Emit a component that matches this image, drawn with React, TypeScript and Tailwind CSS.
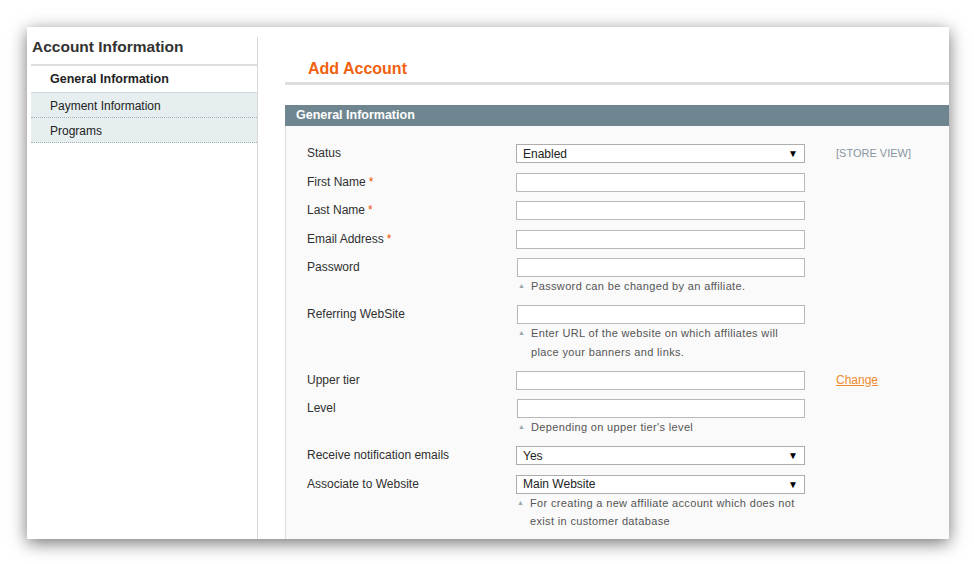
import React from "react";

type Row = {
  label: string;
  required?: boolean;
  kind: "input" | "select";
  value?: string;
  hint?: string[];
  scope?: string;
  link?: string;
  shift?: boolean;
};

const rows: Row[] = [
  { label: "Status", kind: "select", value: "Enabled", scope: "[STORE VIEW]" },
  { label: "First Name", required: true, kind: "input" },
  { label: "Last Name", required: true, kind: "input" },
  { label: "Email Address", required: true, kind: "input" },
  { label: "Password", kind: "input", shift: true, hint: ["Password can be changed by an affiliate."] },
  {
    label: "Referring WebSite",
    kind: "input",
    shift: true,
    hint: ["Enter URL of the website on which affiliates will", "place your banners and links."],
  },
  { label: "Upper tier", kind: "input", link: "Change" },
  { label: "Level", kind: "input", shift: true, hint: ["Depending on upper tier's level"] },
  { label: "Receive notification emails", kind: "select", value: "Yes" },
  {
    label: "Associate to Website",
    kind: "select",
    value: "Main Website",
    hint: ["For creating a new affiliate account which does not", "exist in customer database"],
  },
];

function Field({ row }: { row: Row }) {
  return (
    <div className="flex">
      <div className="w-[230px] shrink-0 pl-[21px] leading-[19px] text-[12px] text-[#303030]">
        {row.label}
        {row.required && <span className="ml-[3px] text-[#eb5202]">*</span>}
      </div>
      <div className={`w-[289px] shrink-0 ${row.shift ? "pl-[1px]" : ""}`}>
        {row.kind === "select" ? (
          <div className="flex h-[19px] items-center justify-between border border-[#adadad] bg-white pl-[6px] pr-[6px] text-[12px] text-[#222]">
            <span>{row.value}</span>
            <span className="text-[10px] text-black">▼</span>
          </div>
        ) : (
          <div className="h-[19px] border border-[#b8b8b8] bg-white" />
        )}
        {row.hint && (
          <div className="text-[11px] leading-[18.5px] tracking-[0.35px] text-[#555]">
            {row.hint.map((h, i) => (
              <div key={i} className="flex">
                <span className="w-[14px] shrink-0 pl-[1px] text-[7px] text-[#9aa5aa]">{i === 0 ? "▲" : ""}</span>
                <span>{h}</span>
              </div>
            ))}
          </div>
        )}
      </div>
      {row.scope && (
        <div className="pl-[31px] pt-[1px] text-[11px] leading-[16px] text-[#8895a0]">{row.scope}</div>
      )}
      {row.link && (
        <div className="pl-[31px] text-[12px] leading-[19px] text-[#f08a2c] underline">{row.link}</div>
      )}
    </div>
  );
}

export default function App() {
  return (
    <div className="h-[564px] w-[974px] bg-white pl-[27px] pt-[27px]" style={{ fontFamily: '"Liberation Sans", Arial, sans-serif' }}>
      <div className="flex h-[512px] w-[922px] overflow-hidden bg-white shadow-[0_4px_16px_rgba(0,0,0,0.55)]">
        {/* Sidebar */}
        <div className="ml-[4px] mt-[10px] w-[227px] shrink-0 border-r border-[#d9d9d9]">
          <div className="h-[29px] border-b-2 border-[#dedede] pl-[1px] text-[15.5px] font-bold leading-[20px] text-[#333]">
            Account Information
          </div>
          <div className="h-[26px] pl-[19px] text-[12.5px] font-bold leading-[26px] text-[#222]">General Information</div>
          <div className="h-[26px] border-t border-b border-b-[#a9b3b5] border-t-[#cfd8da] bg-[#e6eef0] pl-[19px] text-[12px] leading-[26px] text-[#222] [border-bottom-style:dotted]">
            Payment Information
          </div>
          <div className="h-[25px] border-b border-[#a9b3b5] bg-[#e6eef0] pl-[19px] text-[12px] leading-[27px] text-[#222] [border-bottom-style:dotted]">
            Programs
          </div>
        </div>

        {/* Main */}
        <div className="ml-[27px] flex w-[664px] shrink-0 flex-col">
          <div className="h-[58px] border-b-[3px] border-[#dedede] pl-[23px] pt-[32px] text-[16px] font-bold leading-[20px] text-[#f0620f]">
            Add Account
          </div>
          <div className="mt-[20px] h-[21px] bg-[#6f8690] pl-[11px] text-[12.5px] font-bold leading-[21px] text-white">
            General Information
          </div>
          <div className="flex flex-1 flex-col gap-[9.5px] border-l border-[#dcdcdc] bg-[#fafafa] pt-[18px]">
            {rows.map((r) => (
              <Field key={r.label} row={r} />
            ))}
          </div>
        </div>
      </div>
    </div>
  );
}
